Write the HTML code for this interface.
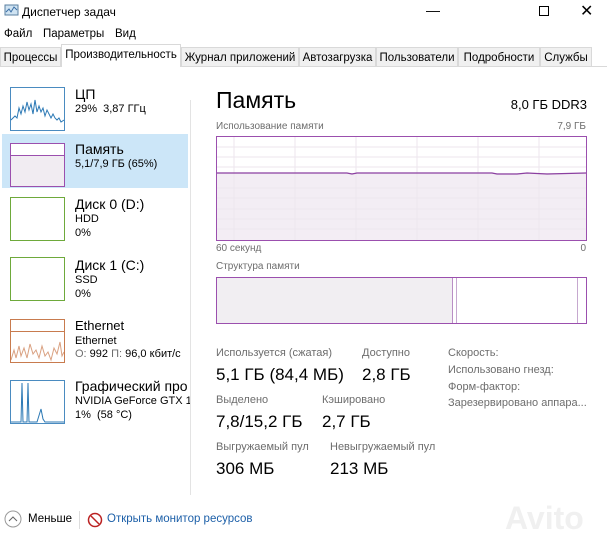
<!DOCTYPE html>
<html><head><meta charset="utf-8"><style>
*{margin:0;padding:0;box-sizing:border-box}
body{width:607px;height:540px;background:#fff;font-family:"Liberation Sans",sans-serif;position:relative;overflow:hidden;color:#000}
.a{position:absolute;white-space:nowrap}
.s{font-size:11px}
.g{color:#6d6d6d}
.tab{position:absolute;top:47px;height:20px;font-size:11.5px;padding-top:4px;text-align:center;border:1px solid #d9d9d9;background:#f0f0f0}
.th{position:absolute;width:55px;height:44px;border:1px solid}
.lbl{font-size:11px;color:#6d6d6d}
.val{font-size:17px}
</style></head><body>
<svg class="a" style="left:4px;top:4px" width="15" height="14"><rect x="1" y="1" width="13" height="10" fill="#cfe3f2" stroke="#5a7fa0"/><polyline points="2,8 5,5 7,8 10,3 13,6" fill="none" stroke="#3a6ea5"/></svg>
<div class="a" style="left:22px;top:5px;font-size:12px">Диспетчер задач</div>
<div class="a" style="left:426px;top:2px;font-size:14px">—</div>
<div class="a" style="left:539px;top:6px;width:10px;height:10px;border:1px solid #000"></div>
<div class="a" style="left:580px;top:1px;font-size:16px">✕</div>
<div class="a" style="left:4px;top:28px;font-size:11.5px">Файл</div>
<div class="a" style="left:43px;top:28px;font-size:11.5px">Параметры</div>
<div class="a" style="left:115px;top:28px;font-size:11.5px">Вид</div>
<div class="a" style="left:0;top:66px;width:607px;height:1px;background:#d9d9d9"></div>
<div class="tab" style="left:0;width:61px">Процессы</div>
<div class="tab" style="left:61px;top:44px;height:23px;width:120px;background:#fff;border-bottom:none">Производительность</div>
<div class="tab" style="left:181px;width:118px">Журнал приложений</div>
<div class="tab" style="left:299px;width:77px">Автозагрузка</div>
<div class="tab" style="left:376px;width:82px">Пользователи</div>
<div class="tab" style="left:458px;width:82px">Подробности</div>
<div class="tab" style="left:540px;width:52px">Службы</div>
<div class="a" style="left:190px;top:100px;width:1px;height:395px;background:#e3e3e3"></div>
<div class="a" style="left:2px;top:134px;width:186px;height:54px;background:#cce6f8"></div>
<div class="th" style="left:10px;top:87px;border-color:#4a8bc0;background:#fff"><svg width="53" height="42"><polyline points="0,32 4,28 6,30 8,20 10,26 12,18 14,24 16,14 18,22 20,16 22,26 24,12 26,24 28,18 30,24 32,20 34,28 36,22 38,26 40,30 42,26 44,30 46,32 48,30 50,34 53,32" fill="none" stroke="#2c79b5" stroke-width="1"/></svg></div>
<div class="a" style="left:75px;top:86px;font-size:14px">ЦП</div>
<div class="a s" style="left:75px;top:103px">29%&nbsp; 3,87 ГГц</div>
<div class="th" style="left:10px;top:143px;border-color:#9b4fae;background:#f1ecf2"><div style="height:12px;border-bottom:1px solid #9b4fae;background:#fff"></div></div>
<div class="a" style="left:75px;top:141px;font-size:14px">Память</div>
<div class="a s" style="left:75px;top:158px">5,1/7,9 ГБ (65%)</div>
<div class="th" style="left:10px;top:197px;border-color:#6ea93b"></div>
<div class="a" style="left:75px;top:196px;font-size:14px">Диск 0 (D:)</div>
<div class="a s" style="left:75px;top:213px">HDD</div><div class="a s" style="left:75px;top:227px">0%</div>
<div class="th" style="left:10px;top:257px;border-color:#6ea93b"></div>
<div class="a" style="left:75px;top:257px;font-size:14px">Диск 1 (C:)</div>
<div class="a s" style="left:75px;top:274px">SSD</div><div class="a s" style="left:75px;top:288px">0%</div>
<div class="th" style="left:10px;top:319px;border-color:#c87b4e"><div style="margin-top:11px;border-top:1px solid #c87b4e"></div><svg width="53" height="30"><polyline points="0,28 3,18 5,26 8,14 10,24 13,16 16,26 19,12 22,22 25,18 28,26 31,14 34,24 37,20 40,28 43,16 46,22 49,10 51,24 53,20" fill="none" stroke="#d9a080"/></svg></div>
<div class="a" style="left:75px;top:318px;font-size:13px">Ethernet</div>
<div class="a s" style="left:75px;top:335px">Ethernet</div>
<div class="a s" style="left:75px;top:348px"><span class="g">О:</span> 992 <span class="g">П:</span> 96,0 кбит/с</div>
<div class="th" style="left:10px;top:380px;border-color:#4a8bc0"><svg width="53" height="42"><polyline points="0,41 10,41 11,2 12,41 16,41 17,2 18,41 26,41 30,28 32,38 34,41 53,41" fill="none" stroke="#2c79b5"/></svg></div>
<div class="a" style="left:75px;top:378px;font-size:14px;width:115px;overflow:hidden">Графический про</div>
<div class="a s" style="left:75px;top:395px;width:115px;overflow:hidden">NVIDIA GeForce GTX 105</div>
<div class="a s" style="left:75px;top:409px">1%&nbsp; (58 °C)</div>
<div class="a" style="left:216px;top:87px;font-size:23px">Память</div>
<div class="a" style="right:20px;top:97px;font-size:13px">8,0 ГБ DDR3</div>
<div class="a lbl" style="left:216px;top:121px;font-size:10px">Использование памяти</div>
<div class="a lbl" style="right:21px;top:121px;font-size:10px">7,9 ГБ</div>
<div class="a" style="left:216px;top:136px;width:371px;height:105px;border:1px solid #9b4fae;background:linear-gradient(#fff 36px,#f3edf4 36px)">
<svg width="369" height="103" style="position:absolute;left:0;top:0"><g stroke="#ece6ee" stroke-width="1"><line x1="17" y1="0" x2="17" y2="103"/><line x1="78" y1="0" x2="78" y2="103"/><line x1="139" y1="0" x2="139" y2="103"/><line x1="200" y1="0" x2="200" y2="103"/><line x1="261" y1="0" x2="261" y2="103"/><line x1="322" y1="0" x2="322" y2="103"/><line x1="0" y1="10" x2="369" y2="10"/><line x1="0" y1="20" x2="369" y2="20"/><line x1="0" y1="30" x2="369" y2="30"/><line x1="0" y1="51" x2="369" y2="51"/><line x1="0" y1="61" x2="369" y2="61"/><line x1="0" y1="72" x2="369" y2="72"/><line x1="0" y1="82" x2="369" y2="82"/><line x1="0" y1="92" x2="369" y2="92"/></g><polyline points="0,36 130,36 135,37 140,36 275,36 280,37 300,37 310,36 330,37 369,36" fill="none" stroke="#8b3fa0" stroke-width="1.2"/></svg></div>
<div class="a lbl" style="left:216px;top:243px;font-size:10px">60 секунд</div>
<div class="a lbl" style="right:21px;top:243px;font-size:10px">0</div>
<div class="a lbl" style="left:216px;top:261px;font-size:10px">Структура памяти</div>
<div class="a" style="left:216px;top:277px;width:371px;height:47px;border:1px solid #9b4fae;background:#fff">
<div style="position:absolute;left:0;top:0;width:236px;height:45px;background:#f1eef2;border-right:1px solid #b98ec5"></div>
<div style="position:absolute;left:239px;top:0;width:1px;height:45px;background:#c6a8cf"></div>
<div style="position:absolute;left:360px;top:0;width:1px;height:45px;background:#c6a8cf"></div></div>
<div class="a lbl" style="left:216px;top:347px">Используется (сжатая)</div>
<div class="a val" style="left:216px;top:365px">5,1 ГБ (84,4 МБ)</div>
<div class="a lbl" style="left:362px;top:347px">Доступно</div>
<div class="a val" style="left:362px;top:365px">2,8 ГБ</div>
<div class="a lbl" style="left:216px;top:394px">Выделено</div>
<div class="a val" style="left:216px;top:412px">7,8/15,2 ГБ</div>
<div class="a lbl" style="left:322px;top:394px">Кэшировано</div>
<div class="a val" style="left:322px;top:412px">2,7 ГБ</div>
<div class="a lbl" style="left:216px;top:441px">Выгружаемый пул</div>
<div class="a val" style="left:216px;top:459px">306 МБ</div>
<div class="a lbl" style="left:330px;top:441px">Невыгружаемый пул</div>
<div class="a val" style="left:330px;top:459px">213 МБ</div>
<div class="a lbl" style="left:448px;top:347px">Скорость:</div>
<div class="a lbl" style="left:448px;top:364px">Использовано гнезд:</div>
<div class="a lbl" style="left:448px;top:381px">Форм-фактор:</div>
<div class="a lbl" style="left:448px;top:397px">Зарезервировано аппара...</div>
<svg class="a" style="left:4px;top:510px" width="18" height="18"><circle cx="9" cy="9" r="8" fill="none" stroke="#999"/><polyline points="5,11 9,7 13,11" fill="none" stroke="#666"/></svg>
<div class="a" style="left:28px;top:513px;font-size:11.5px">Меньше</div>
<div class="a" style="left:79px;top:511px;width:1px;height:18px;background:#ddd"></div>
<svg class="a" style="left:87px;top:512px" width="16" height="16"><circle cx="8" cy="8" r="6.5" fill="#fff" stroke="#b22" stroke-width="1.5"/><line x1="4" y1="4" x2="12" y2="12" stroke="#b22" stroke-width="1.5"/></svg>
<div class="a" style="left:107px;top:513px;font-size:11.5px;color:#1c5fa8">Открыть монитор ресурсов</div>
<div class="a" style="left:505px;top:500px;font-size:32px;font-weight:bold;color:#f0f0f0">Avito</div>
</body></html>
